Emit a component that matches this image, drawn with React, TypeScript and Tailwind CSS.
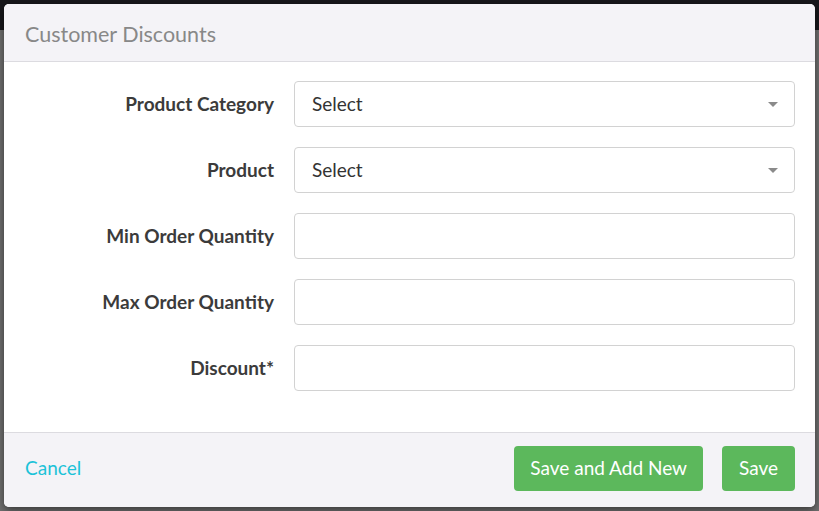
import React from "react";

const Field = ({ label, select }: { label: string; select?: boolean }) => (
  <div className="flex items-center h-[46px]">
    <div className="w-[270px] text-right font-bold text-[19px] text-[#3b3b3b]">{label}</div>
    <div className="ml-[20px] w-[501px] h-[46px] border border-[#d2d2d2] rounded-[4px] bg-white flex items-center px-[17px] justify-between">
      {select && (
        <>
          <span className="text-[19px] text-[#333]">Select</span>
          <span className="w-0 h-0 border-l-[5px] border-r-[5px] border-t-[5px] border-l-transparent border-r-transparent border-t-[#8a8a8a] mr-[-1px]" />
        </>
      )}
    </div>
  </div>
);

export default function App() {
  return (
    <div className="relative w-[819px] h-[511px] bg-[#6f6f6f] overflow-hidden" style={{ fontFamily: "Lato, 'Open Sans', sans-serif" }}>
      <div className="h-[30px] bg-[#17171b]" />
      <div className="absolute left-[4px] top-[4px] w-[811px] h-[503px] rounded-[5px] bg-white overflow-hidden flex flex-col shadow-[0_3px_9px_rgba(0,0,0,0.5)]">
        <div className="h-[58px] bg-[#f4f3f7] border-b border-[#dcdbe0] flex items-center px-[21px] pt-[3px] shrink-0">
          <span className="text-[21.5px] text-[#888888]">Customer Discounts</span>
        </div>
        <div className="flex-1 pt-[19px] flex flex-col gap-[20px]">
          <Field label="Product Category" select />
          <Field label="Product" select />
          <Field label="Min Order Quantity" />
          <Field label="Max Order Quantity" />
          <Field label="Discount*" />
        </div>
        <div className="h-[75px] bg-[#f4f3f7] border-t border-[#dcdbe0] flex items-center px-[21px] pb-[3px] shrink-0">
          <span className="text-[19px] text-[#1cc2d8]">Cancel</span>
          <div className="ml-auto flex gap-[19px] mr-[-1px]">
            <button className="h-[45px] px-[16px] rounded-[4px] bg-[#5cb85c] text-white text-[19px]">Save and Add New</button>
            <button className="h-[45px] px-[17px] rounded-[4px] bg-[#5cb85c] text-white text-[19px]">Save</button>
          </div>
        </div>
      </div>
    </div>
  );
}
